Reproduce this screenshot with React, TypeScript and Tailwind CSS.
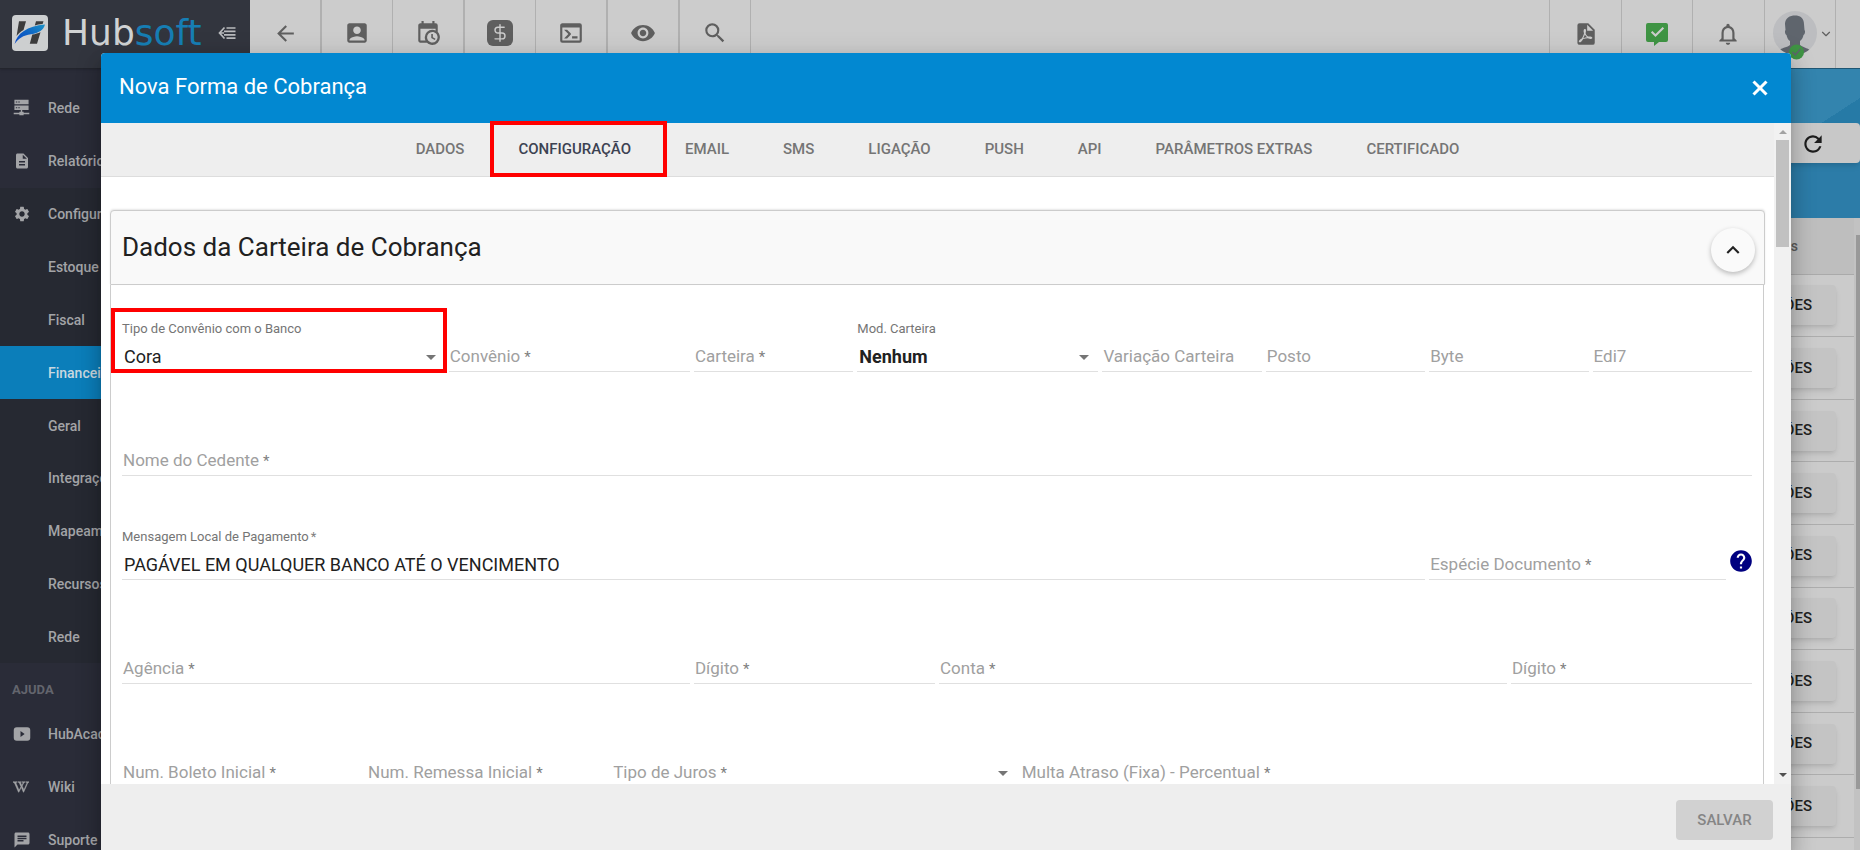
import { useState, type ReactNode } from 'react';
import clsx from 'clsx';
import {
  MdAccountBox,
  MdArrowBack,
  MdChat,
  MdDescription,
  MdHelp,
  MdKeyboardArrowUp,
  MdNotificationsNone,
  MdRefresh,
  MdSearch,
  MdSettings,
  MdVisibility,
} from 'react-icons/md';
import { FaWikipediaW } from 'react-icons/fa';
import { ChevronDown, DollarSign, X } from 'lucide-react';

const TABS = ['Dados', 'Configuração', 'Email', 'SMS', 'Ligação', 'Push', 'API', 'Parâmetros Extras', 'Certificado'];

const CONFIG_ITEMS = ['Estoque', 'Fiscal', 'Financeiro', 'Geral', 'Integrações', 'Mapeamento', 'Recursos', 'Rede'];

function PathIcon({ d, size = 24 }: { d: string; size?: number }) {
  return (
    <svg width={size} height={size} viewBox="0 0 24 24" fill="currentColor" fillRule="evenodd" aria-hidden="true">
      <path d={d} />
    </svg>
  );
}

const CALENDAR_CLOCK =
  'M15,13H16.5V15.82L18.94,17.23L18.19,18.53L15,16.69V13M19,8H5V19H9.67C9.24,18.09 9,17.07 9,16A7,7 0 0,1 16,9C17.07,9 18.09,9.24 19,9.67V8M5,21C3.89,21 3,20.1 3,19V5C3,3.89 3.89,3 5,3H6V1H8V3H16V1H18V3H19A2,2 0 0,1 21,5V11.1C22.24,12.36 23,14.09 23,16A7,7 0 0,1 16,23C14.09,23 12.36,22.24 11.1,21H5M16,11.15A4.85,4.85 0 0,0 11.15,16C11.15,18.68 13.32,20.85 16,20.85A4.85,4.85 0 0,0 20.85,16C20.85,13.32 18.68,11.15 16,11.15Z';
const CONSOLE =
  'M20,19V7H4V19H20M20,3A2,2 0 0,1 22,5V19A2,2 0 0,1 20,21H4A2,2 0 0,1 2,19V5C2,3.89 2.9,3 4,3H20M13,17V15H18V17H13M9.58,13L5.57,9H8.4L11.7,12.3C12.09,12.69 12.09,13.33 11.7,13.72L8.42,17H5.59L9.58,13Z';
const FILE_PDF =
  'M14,9H19.5L14,3.5V9M7,2H15L21,8V20A2,2 0 0,1 19,22H7C5.89,22 5,21.1 5,20V4A2,2 0 0,1 7,2M11.93,12.44C12.34,13.34 12.86,14.08 13.46,14.59L13.87,14.91C13,15.07 11.8,15.35 10.53,15.84L10.42,15.88L10.92,14.84C11.37,13.97 11.7,13.18 11.93,12.44M18.41,16.25C18.59,16.07 18.68,15.84 18.69,15.59C18.72,15.39 18.67,15.2 18.57,15.04C18.28,14.57 17.53,14.35 16.29,14.35L15,14.42L14.13,13.84C13.5,13.32 12.93,12.41 12.53,11.28L12.57,11.14C12.9,9.81 13.21,8.2 12.55,7.54C12.39,7.38 12.17,7.3 11.94,7.3H11.7C11.33,7.3 11,7.69 10.91,8.07C10.54,9.4 10.76,10.13 11.13,11.34V11.35C10.88,12.23 10.56,13.25 10.05,14.28L9.09,16.08L8.2,16.57C7,17.32 6.43,18.16 6.32,18.69C6.28,18.88 6.3,19.05 6.37,19.23L6.4,19.28L6.88,19.59L7.32,19.7C8.13,19.7 9.05,18.75 10.29,16.63L10.47,16.56C11.5,16.23 12.78,16 14.5,15.81C15.53,16.32 16.74,16.55 17.5,16.55C17.94,16.55 18.24,16.44 18.41,16.25Z';
const COMMENT_CHECK =
  'M3,1H21A2,2 0 0,1 23,3V18A2,2 0 0,1 21,20H14L9,24V20H3A2,2 0 0,1 1,18V3A2,2 0 0,1 3,1M17.6,5L10.5,12.1L7.4,9L5.9,10.5L10.5,15.1L19.1,6.5Z';
const SERVER =
  'M2,1H22V7.5H2ZM2,9H22V15.5H2ZM11,15.5H13V18H15V19.5H23V21.5H15V23H9V21.5H1V19.5H9V18H11ZM4,3.5V5H6V3.5ZM7.5,3.5V5H9.5V3.5ZM4,11.5V13H6V11.5ZM7.5,11.5V13H9.5V11.5Z';
const YOUTUBE =
  'M5,3H19A4,4 0 0,1 23,7V17A4,4 0 0,1 19,21H5A4,4 0 0,1 1,17V7A4,4 0 0,1 5,3M10,8V16L15.5,12Z';

function HubsoftMark() {
  return (
    <svg width="36" height="36" viewBox="0 0 36 36" aria-hidden="true">
      <defs>
        <linearGradient id="swoosh" x1="0" y1="1" x2="1" y2="0">
          <stop offset="0" stopColor="#0a46c4" />
          <stop offset="0.5" stopColor="#0d62c4" />
          <stop offset="1" stopColor="#1b93c6" />
        </linearGradient>
      </defs>
      <rect width="36" height="36" rx="4" fill="#cdcfd0" />
      <path d="M7 6.300h7L11.500 15C8.500 16.500 6.500 18.500 4.600 21z" fill="#3c3c3c" />
      <path d="M24 6.300h7.500L30.600 9C27.500 9.300 25 9.800 22.800 10.500z" fill="#3c3c3c" />
      <path d="M20.300 19.500C23.500 19 26 18.300 28.500 17.200L25 28.800h-7.200z" fill="#3c3c3c" />
      <path d="M2.600 29C5 18.500 15 11 33 9.500 31.500 15 27 18 19 19.200 11 20.500 6.500 23 2.600 29z" fill="url(#swoosh)" />
    </svg>
  );
}

function NavItem({ icon, children, active }: { icon?: ReactNode; children: ReactNode; active?: boolean }) {
  return (
    <a
      href="#"
      className={clsx(
        'flex min-h-[52px] flex-1 items-center pl-[13px] text-sm font-medium',
        active ? 'bg-[#0b7eba] text-[#c9d8e0]' : 'text-[#a3a4a7]',
      )}
    >
      <span className="flex w-[35px] shrink-0">{icon}</span>
      {children}
    </a>
  );
}

function Sidebar() {
  return (
    <aside className="flex w-[250px] shrink-0 flex-col overflow-hidden bg-[#2a2c38]">
      <div className="flex h-[69px] shrink-0 items-center border-b border-[#23252d] bg-[#32353e] pr-3.5 pb-0.5 pl-3 shadow">
        <HubsoftMark />
        <span className="ml-3.5 font-['DejaVu_Sans',sans-serif] text-[36px] leading-none text-[#d0d2d3]">
          Hub<span className="text-[#167eb4]">soft</span>
        </span>
        <button aria-label="Recolher menu" className="ml-auto text-[#b9babd]">
          <svg width="18" height="14" viewBox="0 0 18 14" fill="none" stroke="currentColor" strokeWidth="1.700" aria-hidden="true">
            <path d="M8.500 2h9M6 5.400h11.500M6 8.800h11.500M8.500 12.200h9M6.500 1.500L1.500 7l5 5.500M2 7h4" />
          </svg>
        </button>
      </div>
      <nav className="flex flex-col pt-3">
        <div className="flex h-[107px] flex-col">
          <NavItem icon={<PathIcon d={SERVER} size={17} />}>Rede</NavItem>
          <NavItem icon={<MdDescription size={18} />}>Relatórios</NavItem>
        </div>
        <div className="flex h-[475px] flex-col bg-[#262932]">
          <NavItem icon={<MdSettings size={18} />}>Configurações</NavItem>
          {CONFIG_ITEMS.map((item) => (
            <NavItem key={item} active={item === 'Financeiro'}>
              {item}
            </NavItem>
          ))}
        </div>
        <h2 className="flex h-11 items-center pt-2.5 pl-3 text-[13px] font-bold text-[#63656d]">AJUDA</h2>
        <div className="flex h-[159px] flex-col">
          <NavItem icon={<PathIcon d={YOUTUBE} size={18} />}>HubAcademy</NavItem>
          <NavItem icon={<FaWikipediaW size={16} className="stroke-current stroke-[20]" />}>Wiki</NavItem>
          <NavItem icon={<MdChat size={18} />}>Suporte</NavItem>
        </div>
      </nav>
    </aside>
  );
}

function ToolButton({ label, children, thick }: { label: string; children: ReactNode; thick?: boolean }) {
  return (
    <button
      aria-label={label}
      className={clsx('flex flex-1 items-center justify-center border-[#b0b0b0]', thick ? 'border-r-2' : 'border-r')}
    >
      {children}
    </button>
  );
}

function Toolbar() {
  return (
    <header className="flex h-[69px] shrink-0 border-b border-[#1f5673] bg-[#cccccc] text-[#5f5f5f]">
      <div className="flex w-[501px] pb-0.5">
        <ToolButton label="Voltar" thick>
          <MdArrowBack size={25} />
        </ToolButton>
        <ToolButton label="Clientes">
          <MdAccountBox size={26} />
        </ToolButton>
        <ToolButton label="Agenda" thick>
          <PathIcon d={CALENDAR_CLOCK} size={26} />
        </ToolButton>
        <ToolButton label="Financeiro">
          <span className="flex size-[26px] items-center justify-center rounded-md bg-[#5f5f5f] text-[#cccccc]">
            <DollarSign size={20} strokeWidth={1.7} />
          </span>
        </ToolButton>
        <ToolButton label="Terminal" thick>
          <PathIcon d={CONSOLE} size={26} />
        </ToolButton>
        <ToolButton label="Visualizar" thick>
          <MdVisibility size={26} />
        </ToolButton>
        <ToolButton label="Pesquisar">
          <MdSearch size={26} />
        </ToolButton>
      </div>
      <div className="mr-6 ml-auto flex w-[287px] border-l border-[#b0b0b0]">
        <ToolButton label="Relatórios PDF">
          <PathIcon d={FILE_PDF} size={26} />
        </ToolButton>
        <ToolButton label="Mensagens">
          <span className="text-[#3f9444]">
            <PathIcon d={COMMENT_CHECK} />
          </span>
        </ToolButton>
        <ToolButton label="Notificações">
          <MdNotificationsNone size={26} />
        </ToolButton>
        <ToolButton label="Minha conta">
          <span className="flex items-center pl-1.5">
            <svg width="44" height="50" viewBox="0 0 44 50" className="mt-1" aria-hidden="true">
              <clipPath id="avatar">
                <circle cx="22" cy="22" r="22" />
              </clipPath>
              <circle cx="22" cy="22" r="22" fill="#bcbdc0" />
              <g clipPath="url(#avatar)" fill="#5f656d">
                <path d="M12 13C12 7 17 4.500 22 4.500S31 7 31 13l.500 6c1 1 .500 4-1 5-.500 3-2 5-3.500 6v4c4 3 9 3 12 7v5H4v-5c3-4 9-4 13-7v-4c-2-1-3-4-3.500-6-1.500-1-2-4-1-5z" />
              </g>
              <circle cx="23.500" cy="41" r="7.500" fill="#3f9444" />
              <path d="M19.500 41l2.800 2.800 5.200-5.800" fill="none" stroke="#5f656d" strokeWidth="1.500" />
            </svg>
            <ChevronDown size={14} className="ml-0.5 shrink-0" />
          </span>
        </ToolButton>
      </div>
    </header>
  );
}

function Background() {
  return (
    <div className="flex min-w-0 flex-1 flex-col overflow-hidden bg-[#cbcbcb]">
      <Toolbar />
      <div className="h-[54px] shrink-0 bg-[linear-gradient(147deg,#3384ae_calc(100%-21px),#267aa6_calc(100%-21px))]" />
      <div className="h-[95px] shrink-0 bg-[#2c7ca8]">
        <div className="flex h-10 items-center justify-end rounded bg-[#c8c8c8] pt-0.5 pr-[34px] text-[#1d1d1d] shadow-md">
          <button aria-label="Atualizar">
            <MdRefresh size={26} />
          </button>
        </div>
      </div>
      <div className="flex min-h-0 flex-1">
        <div className="flex-1 overflow-hidden">
          <table className="h-[620px] w-full">
            <thead className="h-14 bg-[#bebebe]">
              <tr className="border-b border-[#aaaaaa]">
                <th className="pr-14 text-right text-sm font-medium text-[#5b5b5b]">Ações</th>
              </tr>
            </thead>
            <tbody>
              {Array.from({ length: 9 }, (_, i) => (
                <tr key={i} className="border-b border-[#adadad]">
                  <td className="pr-[18px] text-right">
                    <button className="h-10 rounded bg-[#c4c4c4] px-6 text-[15px] font-medium text-[#212121] shadow-md">
                      AÇÕES
                    </button>
                  </td>
                </tr>
              ))}
            </tbody>
          </table>
        </div>
        <div className="w-1.5 bg-[#c2c2c2] pt-[17px] pl-0.5">
          <div className="h-[554px] bg-[#999999]" />
        </div>
      </div>
    </div>
  );
}

interface FieldProps {
  id: string;
  label: string;
  span: string;
  required?: boolean;
  value?: string;
  select?: boolean;
  bold?: boolean;
  highlight?: boolean;
  children?: ReactNode;
}

function Field({ id, label, span, required, value, select, bold, highlight, children }: FieldProps) {
  const [current, setCurrent] = useState(value ?? '');
  const filled = current !== '';
  const control = clsx(
    'h-[34px] w-full min-w-0 appearance-none rounded-none border-b border-[#e0e0e0] bg-transparent px-0.5 pt-1 text-lg text-[#212121] outline-none',
    'col-start-1 row-start-2',
    bold && 'font-bold',
  );

  return (
    <div className={clsx('flex pr-1', span)}>
      <div className="relative grid min-w-0 flex-1 grid-cols-[minmax(0,1fr)] grid-rows-[18px_34px]">
        <label
          htmlFor={id}
          className={clsx(
            'pointer-events-none col-start-1 whitespace-nowrap',
            filled
              ? 'row-start-1 text-[13px] leading-[18px] text-[#757575]'
              : 'row-start-2 pt-1 pl-px text-[17px] leading-7 text-[#a0a0a0]',
          )}
        >
          {label}
          {required && (
            <span className={clsx('text-[#808080]', filled ? 'ml-0.5' : 'ml-1 text-[15px]')}>*</span>
          )}
        </label>
        {select ? (
          <>
            <select id={id} value={current} onChange={(e) => setCurrent(e.target.value)} className={control}>
              <option value={current}>{current}</option>
            </select>
            <span className="pointer-events-none col-start-1 row-start-2 mt-1 mr-[9px] self-center justify-self-end border-x-[5px] border-t-[5px] border-x-transparent border-t-[#757575]" />
          </>
        ) : (
          <input id={id} value={current} onChange={(e) => setCurrent(e.target.value)} className={control} />
        )}
        {highlight && (
          <div className="pointer-events-none absolute -right-0.5 -bottom-px -left-[11px] h-[65px] border-4 border-[#ff0000]" />
        )}
      </div>
      {children}
    </div>
  );
}

function CarteiraForm() {
  return (
    <form className="mr-px grid grid-cols-20 gap-y-[52px] border-x border-[#cccccc] pt-[35px] pr-[7px] pb-8 pl-[11px]">
      <Field id="convenio-banco" label="Tipo de Convênio com o Banco" span="col-span-4" value="Cora" select highlight />
      <Field id="convenio" label="Convênio" span="col-span-3" required />
      <Field id="carteira" label="Carteira" span="col-span-2" required />
      <Field id="mod-carteira" label="Mod. Carteira" span="col-span-3" value="Nenhum" select bold />
      <Field id="variacao" label="Variação Carteira" span="col-span-2" />
      <Field id="posto" label="Posto" span="col-span-2" />
      <Field id="byte" label="Byte" span="col-span-2" />
      <Field id="edi7" label="Edi7" span="col-span-2" />

      <Field id="cedente" label="Nome do Cedente" span="col-span-20" required />

      <Field
        id="mensagem-local"
        label="Mensagem Local de Pagamento"
        span="col-span-16"
        value="PAGÁVEL EM QUALQUER BANCO ATÉ O VENCIMENTO"
        required
      />
      <Field id="especie" label="Espécie Documento" span="col-span-4" required>
        <button type="button" aria-label="Ajuda" className="mt-5 ml-0.5 -mr-0.5 self-start text-[#000080]">
          <MdHelp size={26} />
        </button>
      </Field>

      <Field id="agencia" label="Agência" span="col-span-7" required />
      <Field id="agencia-digito" label="Dígito" span="col-span-3" required />
      <Field id="conta" label="Conta" span="col-span-7" required />
      <Field id="conta-digito" label="Dígito" span="col-span-3" required />

      <Field id="boleto-inicial" label="Num. Boleto Inicial" span="col-span-3" required />
      <Field id="remessa-inicial" label="Num. Remessa Inicial" span="col-span-3" required />
      <Field id="tipo-juros" label="Tipo de Juros" span="col-span-5" required select />
      <Field id="multa" label="Multa Atraso (Fixa) - Percentual" span="col-span-9" required />
    </form>
  );
}

function TabBar() {
  const [activeTab, setActiveTab] = useState('Configuração');

  return (
    <div role="tablist" className="flex h-[54px] shrink-0 justify-center border-b border-[#dddddd] bg-[#eeeeee]">
      {TABS.map((tab) => (
        <button
          key={tab}
          role="tab"
          aria-selected={tab === activeTab}
          onClick={() => setActiveTab(tab)}
          className={clsx(
            'relative px-[27px] text-[15px] font-medium uppercase',
            tab === activeTab ? 'text-[#3c4252]' : 'text-[#757575]',
          )}
        >
          {tab}
          {tab === 'Configuração' && (
            <span className="absolute -top-0.5 -right-[9px] -bottom-px -left-px border-4 border-[#ff0000]" />
          )}
        </button>
      ))}
    </div>
  );
}

function ScrollTrack() {
  return (
    <div className="flex w-[17px] shrink-0 flex-col items-center bg-[#f1f1f1]">
      <span className="mt-[7px] mb-1.5 border-x-4 border-b-4 border-x-transparent border-b-[#a3a3a3]" />
      <span className="h-[107px] w-[13px] bg-[#c1c1c1]" />
      <span className="mt-auto mb-[7px] border-x-4 border-t-4 border-x-transparent border-t-[#505050]" />
    </div>
  );
}

function CobrancaDialog() {
  return (
    <div
      role="dialog"
      aria-labelledby="dialog-title"
      className="absolute top-[53px] right-[69px] bottom-0 left-[101px] flex flex-col rounded-t bg-white shadow-[0_7px_8px_-4px_rgba(0,0,0,0.2),0_13px_19px_2px_rgba(0,0,0,0.14),0_5px_24px_4px_rgba(0,0,0,0.12)]"
    >
      <div className="flex h-[70px] shrink-0 items-center justify-between rounded-t bg-[#0288d1] px-[18px] text-white">
        <h1 id="dialog-title" className="pb-1 text-[22px]">
          Nova Forma de Cobrança
        </h1>
        <button aria-label="Fechar">
          <X size={26} strokeWidth={2.8} strokeLinecap="butt" />
        </button>
      </div>

      <div className="flex min-h-0 flex-1">
        <div className="flex min-w-0 flex-1 flex-col">
          <TabBar />
          <div className="min-h-0 flex-1 overflow-hidden px-[9px] pt-[33px]">
            <div className="flex h-[75px] items-center justify-between rounded-t border border-[#cccccc] bg-[#f9f9f9] pr-[9px] pl-[11px] shadow-[0_-1px_2px_rgba(0,0,0,0.1)]">
              <h2 className="text-[26px] text-[#212121]">Dados da Carteira de Cobrança</h2>
              <button
                aria-label="Recolher"
                className="mt-1 flex size-11 items-center justify-center rounded-full bg-[#fafafa] text-[#212121] shadow-[0_2px_5px_rgba(0,0,0,0.26)]"
              >
                <MdKeyboardArrowUp size={26} />
              </button>
            </div>
            <CarteiraForm />
          </div>
        </div>
        <ScrollTrack />
      </div>

      <div className="flex h-[66px] shrink-0 items-center justify-end bg-[#eeeeee] pt-1.5 pr-[18px]">
        <button disabled className="h-10 w-[97px] rounded bg-[#d1d1d1] text-[15px] font-medium text-[#858585]">
          SALVAR
        </button>
      </div>
    </div>
  );
}

export default function App() {
  return (
    <div className="relative flex h-screen overflow-hidden font-[Roboto,sans-serif]">
      <Sidebar />
      <Background />
      <CobrancaDialog />
    </div>
  );
}
